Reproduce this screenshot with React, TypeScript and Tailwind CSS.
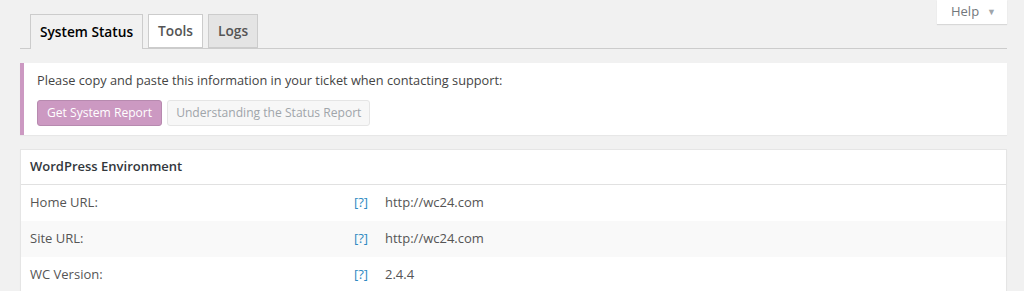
import React from 'react';

const rows = [
  { label: 'Home URL:', value: 'http://wc24.com' },
  { label: 'Site URL:', value: 'http://wc24.com' },
  { label: 'WC Version:', value: '2.4.4' },
];

export default function App() {
  return (
    <div
      className="min-h-[291px] bg-[#f1f1f1] pl-5 pr-[17px] text-[13px] text-[#444]"
      style={{ fontFamily: '"Open Sans", sans-serif' }}
    >
      <div className="relative">
        <button className="absolute right-0 top-0 flex h-[24px] w-[70px] items-center justify-center gap-[8px] bg-white pl-[3px] text-[13px] text-[#72777c] shadow-[0_1px_1px_rgba(0,0,0,0.1)]">
          <span>Help</span>
          <span className="text-[9px] text-[#a0a5aa]">▼</span>
        </button>

        <nav className="flex gap-[5px] border-b border-[#ccc] pl-[10px] pt-[14px]">
          <span className="-mb-px flex h-[35px] items-center border border-b-0 border-[#ccc] bg-[#f1f1f1] px-[9px] text-[13.7px] font-semibold text-[#000]">
            System Status
          </span>
          <span className="flex h-[34px] items-center border border-[#ccc] bg-white px-[9px] text-[13.7px] font-semibold text-[#555]">
            Tools
          </span>
          <span className="flex h-[34px] items-center border border-[#ccc] bg-[#e4e4e4] px-[9px] text-[13.7px] font-semibold text-[#555]">
            Logs
          </span>
        </nav>
      </div>

      <div className="mt-[14px] h-[72px] border-l-4 border-[#cc99c2] bg-white pl-[13px] pt-[8px] shadow-[0_1px_1px_rgba(0,0,0,0.04)]">
        <p className="text-[12.75px] leading-[18px] text-[#444]">
          Please copy and paste this information in your ticket when contacting support:
        </p>
        <div className="mt-[11px] flex gap-[5px]">
          <button className="h-[26px] rounded-[3px] border border-[#b78aaf] bg-[#cc99c2] px-[9px] text-[12.1px] text-white">
            Get System Report
          </button>
          <button className="h-[26px] rounded-[3px] border border-[#e5e5e5] bg-[#f7f7f7] px-[8px] text-[12.1px] text-[#a0a5aa]">
            Understanding the Status Report
          </button>
        </div>
      </div>

      <div className="mt-[14px] border border-[#e5e5e5] bg-white shadow-[0_1px_1px_rgba(0,0,0,0.04)]">
        <div className="flex h-[35px] items-center border-b border-[#e1e1e1] pl-[9px] font-semibold text-[#32373c]">
          WordPress Environment
        </div>
        {rows.map((row, i) => (
          <div
            key={row.label}
            className={`flex h-[36px] items-center ${i % 2 === 1 ? 'bg-[#f9f9f9]' : 'bg-white'}`}
          >
            <span className="w-[333px] pl-[9px] text-[#555]">{row.label}</span>
            <span className="w-[31px] text-[#2e8ac2]">[?]</span>
            <span className="text-[#555]">{row.value}</span>
          </div>
        ))}
      </div>
    </div>
  );
}
